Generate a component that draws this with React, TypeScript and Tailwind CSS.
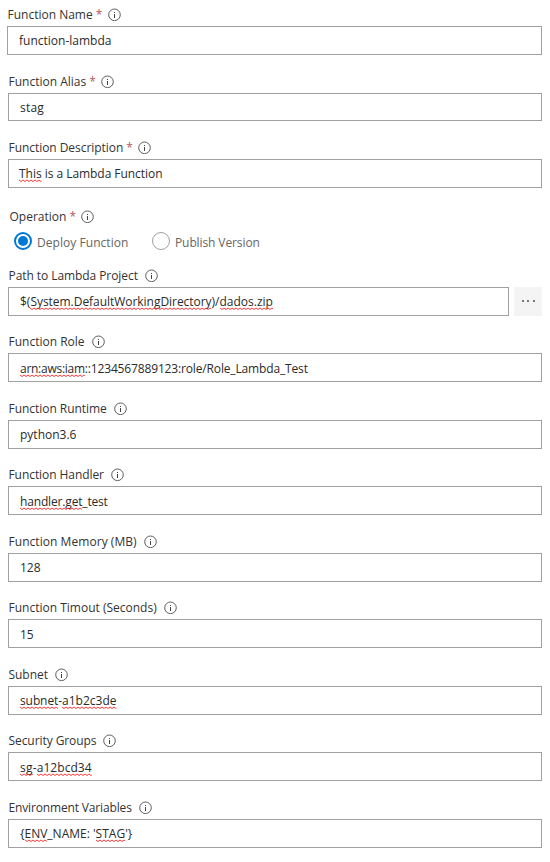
import { useId, type ReactNode } from "react";

function InfoIcon() {
  return (
    <svg className="mt-[3px] h-[13px] w-[13px] shrink-0" viewBox="0 0 13 13" fill="none">
      <circle cx="6.5" cy="6.8" r="5.8" stroke="#555" strokeWidth="0.95" />
      <path d="M6.5 6V10" stroke="#444" strokeWidth="1" />
      <path d="M6.5 4V5" stroke="#444" strokeWidth="1" />
    </svg>
  );
}

// Text with the red wave of the spelling checker under it.
function Misspelt({ children, className = "" }: { children: ReactNode; className?: string }) {
  const id = useId();
  return (
    <span className={`relative inline-block h-5 ${className}`}>
      {children}
      <svg className="absolute top-[15px] left-0 h-[3px] w-full">
        <defs>
          <pattern id={id} width="4" height="3" patternUnits="userSpaceOnUse">
            <path d="M-1 1.5L0 1L2 2.5L4 1L5 1.5" fill="none" stroke="#f22" strokeWidth="0.9" />
          </pattern>
        </defs>
        <rect width="100%" height="3" fill={`url(#${id})`} />
      </svg>
    </span>
  );
}

function Label({ text, required, className = "" }: { text: string; required?: boolean; className?: string }) {
  return (
    <div className="flex h-[22px] items-start pt-px pl-[0.5px] text-[#333]">
      <span className={className}>{text}</span>
      {required && <span className="ml-[3px] w-[5px] text-[#b5575c]">*</span>}
      <span className="ml-[7px] flex">
        <InfoIcon />
      </span>
    </div>
  );
}

type FieldProps = {
  label: string;
  required?: boolean;
  labelClass?: string;
  className?: string;
  boxClass?: string;
  browse?: boolean;
  children: ReactNode;
};

function Field({ label, required, labelClass, className = "", boxClass = "pt-1", browse, children }: FieldProps) {
  return (
    <div className={className}>
      <Label text={label} required={required} className={labelClass} />
      <div className="flex gap-[5px]">
        <div className={`h-[29px] flex-1 border border-[#a0a0a0] bg-white pl-[11px] whitespace-pre text-[#2b2b2b] ${boxClass}`}>
          {children}
        </div>
        {browse && (
          <button className="flex h-[29px] w-7 items-center justify-center gap-[3.5px] bg-[#f4f4f4]">
            <i className="-mt-0.5 h-0.5 w-0.5 bg-[#777]" />
            <i className="-mt-0.5 h-0.5 w-0.5 bg-[#777]" />
            <i className="-mt-0.5 h-0.5 w-0.5 bg-[#777]" />
          </button>
        )}
      </div>
    </div>
  );
}

export default function App() {
  return (
    <main className="h-[862px] w-[550px] bg-white pt-1 pr-2 pl-2 font-['Open_Sans','Noto_Sans',sans-serif] text-[12px] leading-5">
      <Field label="Function Name" required className="-ml-px">
        function-lambda
      </Field>
      <Field label="Function Alias" required className="mt-4" boxClass="!h-7 pt-1">
        <span className="tracking-[0.2px]">stag</span>
      </Field>
      <Field label="Function Description" labelClass="tracking-[-0.05px]" required className="mt-4" boxClass="!pl-[10px] pt-1">
        <Misspelt>This</Misspelt>
        <span className="tracking-[-0.05px]"> is a Lambda Function</span>
      </Field>

      <div className="mt-[18px] pl-px">
        <Label text="Operation" required />
        <div className="mt-1 flex h-[18px] items-center pl-[5px] text-[#666]">
          <span className="flex h-[18px] w-[18px] items-center justify-center rounded-full border-2 border-[#0078d4]">
            <i className="h-[10px] w-[10px] rounded-full bg-[#0078d4]" />
          </span>
          <span className="ml-[5px] w-[115px] pt-1 tracking-[0.05px]">Deploy Function</span>
          <span className="h-[18px] w-[18px] rounded-full border border-[#a0a0a0]" />
          <span className="ml-[5px] pt-1 tracking-[-0.1px]">Publish Version</span>
        </div>
      </div>

      <Field label="Path to Lambda Project" labelClass="tracking-[-0.07px]" className="mt-[15px]" browse>
        $(<Misspelt className="tracking-[-0.04px]">System.DefaultWorkingDirectory</Misspelt>)/<Misspelt>dados.zip</Misspelt>
      </Field>
      <Field label="Function Role" className="mt-[15px]" boxClass="pt-[5px]">
        <Misspelt className="tracking-[-0.27px]">arn:aws:iam</Misspelt>
        <span className="tracking-[-0.15px]">::1234567889123:role/Role_Lambda_Test</span>
      </Field>
      <Field label="Function Runtime" labelClass="tracking-[-0.04px]" className="mt-4">
        python3.6
      </Field>
      <Field label="Function Handler" labelClass="tracking-[-0.07px]" className="mt-[15px]" boxClass="pt-[5px]">
        <Misspelt className="tracking-[-0.16px]">handler.get</Misspelt>
        <span className="tracking-[-0.2px]">_test</span>
      </Field>
      <Field label="Function Memory (MB)" labelClass="tracking-[0.05px]" className="mt-4">
        128
      </Field>
      <Field label="Function Timout (Seconds)" className="mt-[15px]" boxClass="pt-[5px]">
        15
      </Field>
      <Field label="Subnet" labelClass="tracking-[-0.05px]" className="mt-4">
        <Misspelt className="tracking-[-0.1px]">subnet</Misspelt>-<Misspelt>a1b2c3de</Misspelt>
      </Field>
      <Field label="Security Groups" labelClass="tracking-[-0.07px]" className="mt-[15px]" boxClass="pt-[5px]">
        <Misspelt className="tracking-[0.3px]">sg</Misspelt>-<Misspelt className="tracking-[0.05px]">a12bcd34</Misspelt>
      </Field>
      <Field label="Environment Variables" labelClass="tracking-[-0.15px]" className="mt-4">
        {"{"}
        <Misspelt>ENV</Misspelt>
        {"_NAME: '"}
        <Misspelt>STAG</Misspelt>
        {"'}"}
      </Field>
    </main>
  );
}
